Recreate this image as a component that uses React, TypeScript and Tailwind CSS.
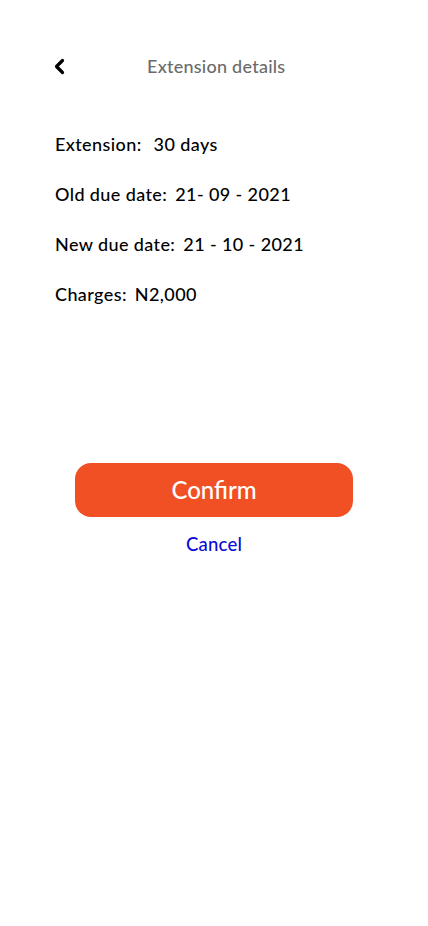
const rows = [
  { label: 'Extension:', value: '30 days', gap: 'ml-3' },
  { label: 'Old due date:', value: '21- 09 - 2021', gap: 'ml-2' },
  { label: 'New due date:', value: '21 - 10 - 2021', gap: 'ml-2' },
  { label: 'Charges:', value: 'N2,000', gap: 'ml-2' },
]

const App = () => {
  return (
    <div className="min-h-[926px] w-full bg-white font-['Lato','Open_Sans',sans-serif] text-black">
      <header className="relative flex h-[133px] items-start px-[53px] pt-[55px]">
        <button aria-label="Back" className="flex h-[22px] w-[16px] items-center">
          <svg width="13" height="17" viewBox="0 0 13 17" fill="none">
            <path d="M9.5 2.5 L3.5 8.5 L9.5 14.5" stroke="#000" strokeWidth="3.2" strokeLinecap="round" strokeLinejoin="round" />
          </svg>
        </button>
        <h1 className="ml-[78px] text-[18px] leading-[22px] tracking-[0.25px] font-medium text-[#6b6b6b]">
          Extension details
        </h1>
      </header>

      <ul className="flex flex-col gap-[28px] px-[55px]">
        {rows.map(row => (
          <li
            key={row.label}
            className="flex h-[22px] items-center text-[18px] leading-[22px] tracking-[0.4px] font-medium"
          >
            <span>{row.label}</span>
            <span className={row.gap}>{row.value}</span>
          </li>
        ))}
      </ul>

      <div className="mt-[158px] flex flex-col items-center">
        <button className="h-[54px] w-[278px] rounded-[16px] bg-[#f15025] text-[24px] font-medium text-white">
          Confirm
        </button>
        <button className="mt-[16px] text-[18.5px] leading-[22px] tracking-[0.2px] font-medium text-[#0a0ad6]">
          Cancel
        </button>
      </div>
    </div>
  )
}

export default App
